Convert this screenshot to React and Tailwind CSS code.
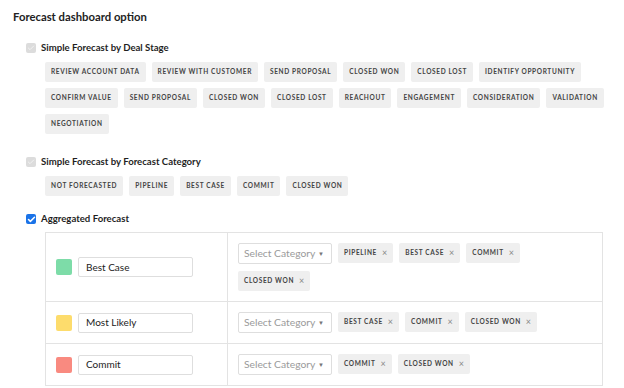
import { Check } from 'lucide-react'

const DEAL_STAGES = [
  'Review Account Data', 'Review with Customer', 'Send Proposal', 'Closed Won', 'Closed Lost',
  'Identify Opportunity', 'Confirm Value', 'Send Proposal', 'Closed Won', 'Closed Lost',
  'Reachout', 'Engagement', 'Consideration', 'Validation', 'Negotiation',
]

const CATEGORIES = ['Not Forecasted', 'Pipeline', 'Best Case', 'Commit', 'Closed Won']

const ROWS = [
  { name: 'Best Case', color: 'bg-[#7ddca8]', tags: ['Pipeline', 'Best Case', 'Commit', 'Closed Won'] },
  { name: 'Most Likely', color: 'bg-[#fddc6c]', tags: ['Best Case', 'Commit', 'Closed Won'] },
  { name: 'Commit', color: 'bg-[#f98a80]', tags: ['Commit', 'Closed Won'] },
]

function Tag({ label, removable }) {
  return (
    <span className="inline-flex items-center h-[20px] px-[6px] bg-[#efefef] rounded-[2px] text-[6.5px] font-bold tracking-[0.1em] uppercase text-[#444]">
      {label}
      {removable && <span className="ml-[5px] text-[9px] font-normal text-[#888] tracking-normal">×</span>}
    </span>
  )
}

function Box({ checked }) {
  if (checked) {
    return (
      <span className="w-[10px] h-[10px] rounded-[2px] bg-[#1a73e8] flex items-center justify-center">
        <Check size={9} strokeWidth={4} className="text-white" />
      </span>
    )
  }
  return (
    <span className="w-[10px] h-[10px] rounded-[2px] bg-[#dcdcdc] flex items-center justify-center">
      <Check size={8} strokeWidth={3} className="text-[#f2f2f2]" />
    </span>
  )
}

function Option({ label, checked }) {
  return (
    <div className="flex items-center gap-[5px] h-[14px]">
      <Box checked={checked} />
      <span className="text-[9.6px] font-bold text-[#1f1f1f]">{label}</span>
    </div>
  )
}

export default function App() {
  return (
    <div className="w-[624px] h-[388px] overflow-hidden bg-white pl-[13px] pt-[10px] font-['Lato',sans-serif]">
      <h1 className="text-[11.3px] font-bold text-[#222] leading-[14px]">Forecast dashboard option</h1>

      <div className="pl-[13px] mt-[17px]">
        <Option label="Simple Forecast by Deal Stage" checked={false} />
        <div className="ml-[19px] mt-[7px] flex flex-wrap gap-[6px] w-[570px]">
          {DEAL_STAGES.map((s, i) => <Tag key={i} label={s} />)}
        </div>

        <div className="mt-[21px]">
          <Option label="Simple Forecast by Forecast Category" checked={false} />
        </div>
        <div className="ml-[19px] mt-[7px] flex flex-wrap gap-[6px]">
          {CATEGORIES.map((s) => <Tag key={s} label={s} />)}
        </div>

        <div className="mt-[16px]">
          <Option label="Aggregated Forecast" checked />
        </div>

        <div className="ml-[19px] mt-[6px] w-[558px] border border-[#e3e3e3]">
          {ROWS.map((r, i) => (
            <div key={r.name} className={`flex ${i > 0 ? 'border-t border-[#e3e3e3]' : ''}`}>
              <div className="w-[182px] border-r border-[#e3e3e3] flex items-center pl-[10px] gap-[6px]">
                <span className={`w-[16px] h-[16px] rounded-[2px] ${r.color}`} />
                <div className="w-[115px] h-[20px] border border-[#dedede] rounded-[2px] flex items-center pl-[7px] text-[10px] text-[#222]">
                  {r.name}
                </div>
              </div>
              <div className="flex-1 flex flex-wrap gap-x-[6px] gap-y-[7px] py-[10px] pl-[10px] pr-[10px]">
                <div className="w-[94px] h-[21px] border border-[#dedede] rounded-[2px] flex items-center justify-between pl-[5px] pr-[7px] text-[10.3px] text-[#9a9a9a]">
                  Select Category
                  <span className="text-[6px] text-[#777]">▼</span>
                </div>
                {r.tags.map((t) => <Tag key={t} label={t} removable />)}
              </div>
            </div>
          ))}
        </div>
      </div>
    </div>
  )
}
